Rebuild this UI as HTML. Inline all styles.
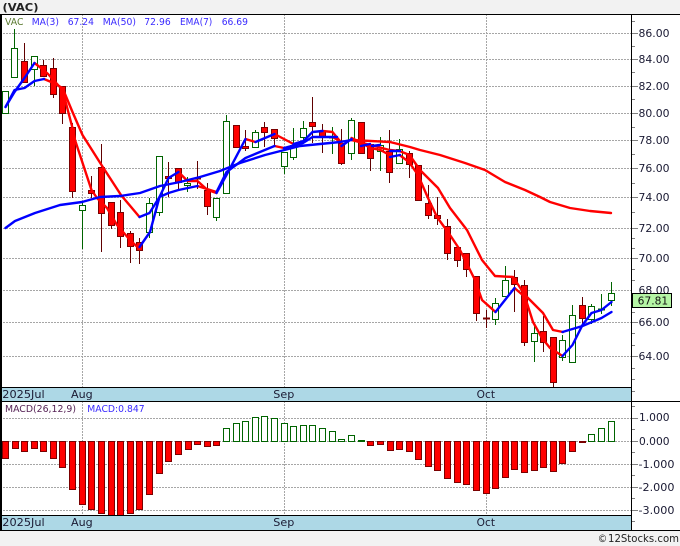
<!DOCTYPE html>
<html><head><meta charset="utf-8"><style>
html,body{margin:0;padding:0;background:#f2f2f2;width:680px;height:546px;overflow:hidden}
svg{display:block}
text{font-family:"DejaVu Sans","Liberation Sans",sans-serif;font-size:10.5px}
</style></head><body>
<svg width="680" height="546" viewBox="0 0 680 546" xmlns="http://www.w3.org/2000/svg">
<rect x="0" y="0" width="680" height="546" fill="#f2f2f2"/>
<rect x="0" y="14" width="680" height="516" fill="#fff"/>
<g fill="none" stroke="#a6a6a6" stroke-width="1" stroke-dasharray="2 1">
<path d="M0 33.5H632M0 59.5H632M0 86.5H632M0 113.5H632M0 140.5H632M0 168.5H632M0 197.5H632M0 228.5H632M0 258.5H632M0 290.5H632M0 322.5H632M0 356.5H632"/>
<path d="M0 418.5H632M0 441.5H632M0 464.5H632M0 487.5H632M0 510.5H632"/>
<path d="M82.5 14V387M284.5 14V387M486.5 14V387M82.5 401V515M284.5 401V515M486.5 401V515"/>
</g>
<path fill="none" stroke="#006400" d="M14.5 29V78M34.5 56V86M82.5 202V249M149.5 198V238M159.5 156V216M187.5 177V192M216.5 198V221M226.5 115V193M255.5 130V147M284.5 152V174M293.5 128V160M303.5 121V142M332.5 127V154M351.5 118V160M380.5 137V171M399.5 139V163M495.5 298V325M505.5 266V296M534.5 325V362M562.5 335V361M572.5 305V362M591.5 304V324M601.5 294V314M611.5 282V306"/>
<path fill="none" stroke="#600000" d="M24.5 43V82M43.5 60V77M53.5 58V98M62.5 86V124M72.5 123V198M91.5 176V198M101.5 144V252M111.5 202V229M120.5 200V248M130.5 231V263M139.5 238V264M168.5 162V197M178.5 168V189M197.5 161V189M207.5 183V215M245.5 130V151M264.5 122V147M274.5 129V147M312.5 97V143M322.5 124V153M341.5 129V165M370.5 144V171M389.5 130V183M409.5 151V178M428.5 185V219M437.5 197V225M447.5 219V260M457.5 247V267M466.5 253V277M476.5 276V321M486.5 310V328M514.5 270V312M524.5 280V346M543.5 316V352M553.5 337V387M582.5 297V325"/>
<g fill="#fff" stroke="#006400" stroke-width="1">
<rect x="2.5" y="91.5" width="6" height="22"/><rect x="11.5" y="48.5" width="6" height="29"/><rect x="31.5" y="56.5" width="6" height="13"/><rect x="79.5" y="205.5" width="6" height="5"/><rect x="146.5" y="203.5" width="6" height="29"/><rect x="156.5" y="156.5" width="6" height="56"/><rect x="184.5" y="183.5" width="6" height="2"/><rect x="213.5" y="198.5" width="6" height="19"/><rect x="223.5" y="121.5" width="6" height="72"/><rect x="252.5" y="132.5" width="6" height="15"/><rect x="281.5" y="152.5" width="6" height="14"/><rect x="290.5" y="145.5" width="6" height="12"/><rect x="300.5" y="128.5" width="6" height="9"/><rect x="329.5" y="137" width="6" height="1"/><rect x="348.5" y="120.5" width="6" height="33"/><rect x="377.5" y="145.5" width="6" height="6"/><rect x="396.5" y="149.5" width="6" height="14"/><rect x="492.5" y="303.5" width="6" height="16"/><rect x="502.5" y="280.5" width="6" height="16"/><rect x="531.5" y="333.5" width="6" height="8"/><rect x="559.5" y="340.5" width="6" height="17"/><rect x="569.5" y="315.5" width="6" height="47"/><rect x="588.5" y="306.5" width="6" height="13"/><rect x="598.5" y="309" width="6" height="1"/><rect x="608.5" y="293.5" width="6" height="7"/>
</g>
<g fill="#ff0000" stroke="#7a0000" stroke-width="1">
<rect x="21.5" y="61.5" width="6" height="21"/><rect x="40.5" y="65.5" width="6" height="11"/><rect x="50.5" y="68.5" width="6" height="26"/><rect x="59.5" y="86.5" width="6" height="27"/><rect x="69.5" y="127.5" width="6" height="64"/><rect x="88.5" y="190.5" width="6" height="3"/><rect x="98.5" y="167.5" width="6" height="46"/><rect x="108.5" y="202.5" width="6" height="23"/><rect x="117.5" y="212.5" width="6" height="24"/><rect x="127.5" y="233.5" width="6" height="13"/><rect x="136.5" y="242.5" width="6" height="8"/><rect x="165.5" y="176.5" width="6" height="2"/><rect x="175.5" y="168.5" width="6" height="14"/><rect x="194.5" y="178" width="6" height="1"/><rect x="204.5" y="190.5" width="6" height="16"/><rect x="233.5" y="125.5" width="6" height="22"/><rect x="242.5" y="146.5" width="6" height="2"/><rect x="261.5" y="127.5" width="6" height="5"/><rect x="271.5" y="129.5" width="6" height="9"/><rect x="309.5" y="122.5" width="6" height="4"/><rect x="319.5" y="131.5" width="6" height="6"/><rect x="338.5" y="143.5" width="6" height="20"/><rect x="358.5" y="122.5" width="6" height="31"/><rect x="367.5" y="144.5" width="6" height="14"/><rect x="386.5" y="151.5" width="6" height="21"/><rect x="406.5" y="153.5" width="6" height="11"/><rect x="415.5" y="165.5" width="6" height="35"/><rect x="425.5" y="203.5" width="6" height="12"/><rect x="434.5" y="215.5" width="6" height="3"/><rect x="444.5" y="226.5" width="6" height="27"/><rect x="454.5" y="247.5" width="6" height="13"/><rect x="463.5" y="253.5" width="6" height="16"/><rect x="473.5" y="276.5" width="6" height="37"/><rect x="483.5" y="318" width="6" height="1"/><rect x="511.5" y="277.5" width="6" height="7"/><rect x="521.5" y="285.5" width="6" height="57"/><rect x="540.5" y="331.5" width="6" height="11"/><rect x="550.5" y="337.5" width="6" height="45"/><rect x="579.5" y="305.5" width="6" height="13"/>
</g>
<g fill="none" stroke-width="2.4" stroke-linejoin="round" stroke-linecap="round">
<g stroke="#ff0000">
<path d="M351.5 140L390 142L410 147L420 150L440 155L465 163L485 170L505 182L525 190L540 197L550 202L570 208L590 211L611 213"/>
<path d="M34.5 63L43.5 70L48 74L53.5 80L62.5 90L72.5 128L75 140L91.5 190L97 198L107 208L117 225L130 240L139.5 249"/>
<path d="M44 79L53.5 83L62.5 88L72.5 112L82.5 135L101.5 165L121 195L139.5 217"/>
<path d="M178.5 172L187.5 181L197.5 181L207.5 190L216.5 193"/>
<path d="M197.5 186L207 189L216.5 192"/>
<path d="M245.5 139L255.5 142M274.5 134L293.5 144M274.5 146L284 148M322.5 131L332.5 132L341.5 143M332.5 137L341.5 142M351.5 138L361.5 143L370.5 148L380.5 150L389.5 155"/>
<path d="M351.5 140L370.5 145L389.5 150L399.5 151L409.5 155L420 170L438 188L450 208L467 230L482 260L495 276L513 277L525 295L543 313L553 330L563 332"/>
<path d="M399.5 155L409 162L418 175L428 198L437 217L450 235L460 250L470 270L475 280L482 300L495.5 312"/>
<path d="M514.5 288L525 297L533 322L542 338L550 348L562.5 356"/>
</g>
<g stroke="#0000ff">
<path d="M5.5 228L15 221L35 213L60 205L82 202L100 197L120 196L140 193L160 186L180 182L200 177L220 171L240 163L265 155L300 146L340 142L351.5 140"/>
<path d="M5.5 107L14.5 92L24.5 78L34.5 63"/>
<path d="M5.5 107L14.5 90L24.5 88L34.5 81L44 79"/>
<path d="M139.5 247L150 232L159.5 197L168.5 178L178.5 172"/>
<path d="M139.5 217L149.5 213L159.5 197L168.5 193L178.5 190L197.5 186"/>
<path d="M216.5 193L226.5 175L245.5 139M255.5 142L274.5 134M293.5 144L303.5 141L312.5 132L322.5 131"/>
<path d="M216.5 192L226.5 172L245.5 158L274.5 146M284 148L303 143L312.5 137L337 137M341.5 146L351.5 139"/>
<path d="M361 146L370 144M372 146L380 145M390 151L400 151M390 157L400 155"/>
<path d="M495.5 312L514.5 288M562.5 356L572.5 345L582.5 325L591.5 313L601.5 310L611.5 302"/>
<path d="M562.5 332L582.5 326L601.5 318L611.5 312"/>
</g>
</g>
<g fill="#ff0000" stroke="#7a0000" stroke-width="1">
<rect x="2.5" y="441.5" width="6" height="17"/><rect x="12.5" y="441.5" width="6" height="7"/><rect x="21.5" y="441.5" width="6" height="10"/><rect x="31.5" y="441.5" width="6" height="7"/><rect x="40.5" y="441.5" width="6" height="10"/><rect x="50.5" y="441.5" width="6" height="17"/><rect x="59.5" y="441.5" width="6" height="26"/><rect x="69.5" y="441.5" width="6" height="48"/><rect x="79.5" y="441.5" width="6" height="63"/><rect x="88.5" y="441.5" width="6" height="68"/><rect x="98.5" y="441.5" width="6" height="72"/><rect x="108.5" y="441.5" width="6" height="76"/><rect x="117.5" y="441.5" width="6" height="76"/><rect x="127.5" y="441.5" width="6" height="72"/><rect x="136.5" y="441.5" width="6" height="68"/><rect x="146.5" y="441.5" width="6" height="53"/><rect x="156.5" y="441.5" width="6" height="32"/><rect x="165.5" y="441.5" width="6" height="20"/><rect x="175.5" y="441.5" width="6" height="13"/><rect x="185.5" y="441.5" width="6" height="8"/><rect x="194.5" y="441.5" width="6" height="3"/><rect x="204.5" y="441.5" width="6" height="5"/><rect x="213.5" y="441.5" width="6" height="4"/>
<rect x="367.5" y="441.5" width="6" height="4"/><rect x="377.5" y="441.5" width="6" height="3"/><rect x="387.5" y="441.5" width="6" height="9"/><rect x="396.5" y="441.5" width="6" height="8"/><rect x="406.5" y="441.5" width="6" height="10"/><rect x="415.5" y="441.5" width="6" height="18"/><rect x="425.5" y="441.5" width="6" height="25"/><rect x="434.5" y="441.5" width="6" height="29"/><rect x="444.5" y="441.5" width="6" height="37"/><rect x="454.5" y="441.5" width="6" height="41"/><rect x="463.5" y="441.5" width="6" height="43"/><rect x="473.5" y="441.5" width="6" height="49"/><rect x="483.5" y="441.5" width="6" height="52"/><rect x="492.5" y="441.5" width="6" height="47"/><rect x="502.5" y="441.5" width="6" height="36"/><rect x="511.5" y="441.5" width="6" height="28"/><rect x="521.5" y="441.5" width="6" height="31"/><rect x="531.5" y="441.5" width="6" height="29"/><rect x="540.5" y="441.5" width="6" height="26"/><rect x="550.5" y="441.5" width="6" height="30"/><rect x="559.5" y="441.5" width="6" height="22"/><rect x="569.5" y="441.5" width="6" height="10"/><rect x="579.5" y="441.5" width="6" height="1"/>
</g>
<g fill="#fff" stroke="#006400" stroke-width="1">
<rect x="223.5" y="428.5" width="6" height="13"/><rect x="233.5" y="423.5" width="6" height="18"/><rect x="242.5" y="421.5" width="6" height="20"/><rect x="252.5" y="417.5" width="6" height="24"/><rect x="261.5" y="416.5" width="6" height="25"/><rect x="271.5" y="418.5" width="6" height="23"/><rect x="281.5" y="423.5" width="6" height="18"/><rect x="290.5" y="426.5" width="6" height="15"/><rect x="300.5" y="425.5" width="6" height="16"/><rect x="309.5" y="425.5" width="6" height="16"/><rect x="319.5" y="428.5" width="6" height="13"/><rect x="329.5" y="431.5" width="6" height="10"/><rect x="338.5" y="439.5" width="6" height="2"/><rect x="348.5" y="435.5" width="6" height="6"/><rect x="358.5" y="440.5" width="6" height="1" fill="#006400"/><rect x="588.5" y="434.5" width="6" height="7"/><rect x="598.5" y="428.5" width="6" height="13"/><rect x="608.5" y="421.5" width="6" height="20"/>
</g>
<rect x="0" y="387" width="632" height="14" fill="#add8e6"/>
<rect x="0" y="515" width="632" height="15" fill="#add8e6"/>
<g stroke="#000" stroke-width="1" fill="none">
<path d="M0 14.5H680M0 387.5H632M0 401.5H680M0 515.5H632M0 530.5H680M631.5 14V530"/>
<path d="M1 14V530" stroke-width="2"/>
</g>
<path stroke="#808080" stroke-width="1" fill="none" d="M632 21.5H635M632 33.5H638M632 46.5H635M632 59.5H638M632 72.5H635M632 86.5H638M632 99.5H635M632 113.5H638M632 127.5H635M632 140.5H638M632 154.5H635M632 168.5H638M632 183.5H635M632 197.5H638M632 212.5H635M632 228.5H638M632 238.5H635M632 248.5H635M632 258.5H638M632 269.5H635M632 280.5H635M632 312.5H635M632 322.5H638M632 333.5H635M632 345.5H635M632 356.5H638M632 368.5H635M632 379.5H635M632 391.5H635M632 406.5H635M632 418.5H638M632 429.5H635M632 441.5H638M632 452.5H635M632 464.5H638M632 475.5H635M632 487.5H638M632 498.5H635M632 510.5H638M632 521.5H635"/>
<text x="2.5" y="11" fill="#222" style="font-weight:700" textLength="36" lengthAdjust="spacingAndGlyphs">(VAC)</text>
<g style="font-size:9.5px">
<text x="5" y="25" fill="#5a7a30" style="font-size:9.5px" textLength="18.5" lengthAdjust="spacingAndGlyphs">VAC</text>
<text x="31.7" y="25" fill="#3a2aff" style="font-size:9.5px" textLength="27.3" lengthAdjust="spacingAndGlyphs">MA(3)</text>
<text x="67.7" y="25" fill="#3a2aff" style="font-size:9.5px" textLength="26.3" lengthAdjust="spacingAndGlyphs">67.24</text>
<text x="102.7" y="25" fill="#3a2aff" style="font-size:9.5px" textLength="33.3" lengthAdjust="spacingAndGlyphs">MA(50)</text>
<text x="144.3" y="25" fill="#3a2aff" style="font-size:9.5px" textLength="26.4" lengthAdjust="spacingAndGlyphs">72.96</text>
<text x="180" y="25" fill="#3a2aff" style="font-size:9.5px" textLength="32.3" lengthAdjust="spacingAndGlyphs">EMA(7)</text>
<text x="221.7" y="25" fill="#3a2aff" style="font-size:9.5px" textLength="26.3" lengthAdjust="spacingAndGlyphs">66.69</text>
<text x="5" y="412" fill="#552255" style="font-size:9.5px" textLength="71" lengthAdjust="spacingAndGlyphs">MACD(26,12,9)</text>
<text x="87.3" y="412" fill="#3a2aff" style="font-size:9.5px" textLength="57.4" lengthAdjust="spacingAndGlyphs">MACD:0.847</text>
</g>
<g fill="#1a1a33">
<text x="638.5" y="37" textLength="31" lengthAdjust="spacingAndGlyphs">86.00</text><text x="638.5" y="63" textLength="31" lengthAdjust="spacingAndGlyphs">84.00</text><text x="638.5" y="90" textLength="31" lengthAdjust="spacingAndGlyphs">82.00</text><text x="638.5" y="117" textLength="31" lengthAdjust="spacingAndGlyphs">80.00</text><text x="638.5" y="144" textLength="31" lengthAdjust="spacingAndGlyphs">78.00</text><text x="638.5" y="172" textLength="31" lengthAdjust="spacingAndGlyphs">76.00</text><text x="638.5" y="201" textLength="31" lengthAdjust="spacingAndGlyphs">74.00</text><text x="638.5" y="232" textLength="31" lengthAdjust="spacingAndGlyphs">72.00</text><text x="638.5" y="262" textLength="31" lengthAdjust="spacingAndGlyphs">70.00</text><text x="638.5" y="294" textLength="31" lengthAdjust="spacingAndGlyphs">68.00</text><text x="638.5" y="326" textLength="31" lengthAdjust="spacingAndGlyphs">66.00</text><text x="638.5" y="360" textLength="31" lengthAdjust="spacingAndGlyphs">64.00</text>
<text x="639" y="421" textLength="30.5" lengthAdjust="spacingAndGlyphs">1.000</text><text x="639" y="445" textLength="30.5" lengthAdjust="spacingAndGlyphs">0.000</text><text x="638.5" y="468" textLength="36" lengthAdjust="spacingAndGlyphs">-1.000</text><text x="638.5" y="491" textLength="36" lengthAdjust="spacingAndGlyphs">-2.000</text><text x="638.5" y="514" textLength="36" lengthAdjust="spacingAndGlyphs">-3.000</text>
<text x="2.3" y="398" textLength="42.3" lengthAdjust="spacingAndGlyphs">2025Jul</text><text x="71" y="398" textLength="21.7" lengthAdjust="spacingAndGlyphs">Aug</text><text x="273.3" y="398" textLength="21" lengthAdjust="spacingAndGlyphs">Sep</text><text x="476.7" y="398" textLength="18.3" lengthAdjust="spacingAndGlyphs">Oct</text>
<text x="2.3" y="526" textLength="42.3" lengthAdjust="spacingAndGlyphs">2025Jul</text><text x="71" y="526" textLength="21.7" lengthAdjust="spacingAndGlyphs">Aug</text><text x="273.3" y="526" textLength="21" lengthAdjust="spacingAndGlyphs">Sep</text><text x="476.7" y="526" textLength="18.3" lengthAdjust="spacingAndGlyphs">Oct</text>
</g>
<rect x="632.5" y="293.5" width="39" height="14" fill="#b5f5a5" stroke="#000"/>
<text x="637.7" y="304.5" fill="#111" textLength="30.5" lengthAdjust="spacingAndGlyphs">67.81</text>
<text x="597.7" y="542" fill="#222" textLength="9.5" lengthAdjust="spacingAndGlyphs">©</text>
<text x="608" y="542" fill="#222" textLength="71" lengthAdjust="spacingAndGlyphs">12Stocks.com</text>
</svg>
</body></html>
